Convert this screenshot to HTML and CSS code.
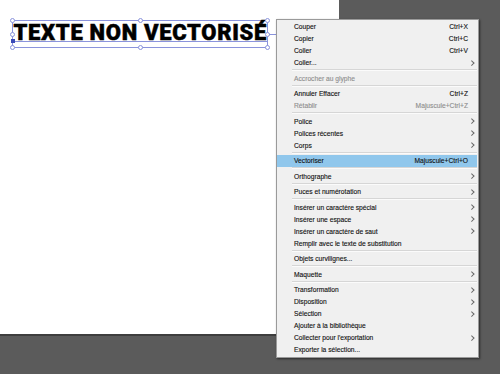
FILE: index.html
```html
<!DOCTYPE html>
<html lang="fr">
<head>
<meta charset="utf-8">
<link rel="stylesheet" href="styles.css">
</head>
<body>
<div class="canvas">
  <div class="artboard">
    <div class="frame">
      <span class="title">TEXTE NON VECTORISÉ</span>
      <i class="baseline"></i>
      <i class="bl-mark"></i>
      <i class="h tl"></i><i class="h tm"></i><i class="h tr"></i>
      <i class="h ml"></i><i class="h mr"></i>
      <i class="h bl"></i><i class="h bm"></i><i class="h br"></i>
      <i class="port"></i>
    </div>
  </div>
  <div class="menu">
    <div class="mi"><span class="lbl">Couper</span><span class="key">Ctrl+X</span><span class="arr"></span></div>
    <div class="mi"><span class="lbl">Copier</span><span class="key">Ctrl+C</span><span class="arr"></span></div>
    <div class="mi"><span class="lbl">Coller</span><span class="key">Ctrl+V</span><span class="arr"></span></div>
    <div class="mi"><span class="lbl">Coller...</span><span class="arr sub"></span></div>
    <div class="sep"></div>
    <div class="mi dis"><span class="lbl">Accrocher au glyphe</span><span class="arr"></span></div>
    <div class="sep"></div>
    <div class="mi"><span class="lbl">Annuler Effacer</span><span class="key">Ctrl+Z</span><span class="arr"></span></div>
    <div class="mi dis"><span class="lbl">Rétablir</span><span class="key">Majuscule+Ctrl+Z</span><span class="arr"></span></div>
    <div class="sep"></div>
    <div class="mi"><span class="lbl">Police</span><span class="arr sub"></span></div>
    <div class="mi"><span class="lbl">Polices récentes</span><span class="arr sub"></span></div>
    <div class="mi"><span class="lbl">Corps</span><span class="arr sub"></span></div>
    <div class="sep"></div>
    <div class="mi hl"><span class="lbl">Vectoriser</span><span class="key">Majuscule+Ctrl+O</span><span class="arr"></span></div>
    <div class="sep"></div>
    <div class="mi"><span class="lbl">Orthographe</span><span class="arr sub"></span></div>
    <div class="sep"></div>
    <div class="mi"><span class="lbl">Puces et numérotation</span><span class="arr sub"></span></div>
    <div class="sep"></div>
    <div class="mi"><span class="lbl">Insérer un caractère spécial</span><span class="arr sub"></span></div>
    <div class="mi"><span class="lbl">Insérer une espace</span><span class="arr sub"></span></div>
    <div class="mi"><span class="lbl">Insérer un caractère de saut</span><span class="arr sub"></span></div>
    <div class="mi"><span class="lbl">Remplir avec le texte de substitution</span><span class="arr"></span></div>
    <div class="sep"></div>
    <div class="mi"><span class="lbl">Objets curvilignes...</span><span class="arr"></span></div>
    <div class="sep"></div>
    <div class="mi"><span class="lbl">Maquette</span><span class="arr sub"></span></div>
    <div class="sep"></div>
    <div class="mi"><span class="lbl">Transformation</span><span class="arr sub"></span></div>
    <div class="mi"><span class="lbl">Disposition</span><span class="arr sub"></span></div>
    <div class="mi"><span class="lbl">Sélection</span><span class="arr sub"></span></div>
    <div class="mi"><span class="lbl">Ajouter à la bibliothèque</span><span class="arr"></span></div>
    <div class="mi"><span class="lbl">Collecter pour l'exportation</span><span class="arr sub"></span></div>
    <div class="mi"><span class="lbl">Exporter la sélection...</span><span class="arr"></span></div>
  </div>
</div>
</body>
</html>
```

FILE: styles.css
```css
* { box-sizing: border-box; }
html, body { margin: 0; padding: 0; }
body {
  background: #5b5b5b;
  width: 500px;
  height: 374px;
  overflow: hidden;
}
.canvas {
  position: relative;
  width: 500px;
  height: 374px;
}
.artboard {
  width: 339px;
  height: 336px;
  background: #ffffff;
  border-bottom: 2px solid #3e3e3e;
  padding-top: 20px;
  padding-left: 12px;
}
.frame {
  position: relative;
  width: 256px;
  height: 28px;
  border: 1px solid #8a93dc;
}
.title {
  display: block;
  font-family: Roboto, "Liberation Sans", sans-serif;
  font-weight: 900;
  font-size: 22px;
  line-height: 24.5px;
  color: #000;
  padding-left: 0.5px;
  white-space: nowrap;
  letter-spacing: 0.7px;
  -webkit-text-stroke: 0.5px #000;
}
.baseline {
  position: absolute;
  left: 0;
  right: 0;
  top: 19.5px;
  height: 1px;
  background: #8a93dc;
}
.bl-mark {
  position: absolute;
  left: -2.5px;
  top: 18px;
  width: 4px;
  height: 4px;
  background: #3b4bb8;
}
.h {
  position: absolute;
  width: 5px;
  height: 5px;
  border: 1px solid #8a93dc;
  border-radius: 50%;
  background: #fff;
}
.tl { left: -3px; top: -3px; }
.tm { left: 124.5px; top: -3px; }
.tr { right: -3px; top: -3px; }
.ml { left: -3px; top: 10.5px; }
.mr { right: -3px; top: 10.5px; }
.bl { left: -3px; bottom: -3px; }
.bm { left: 124.5px; bottom: -3px; }
.br { right: -3px; bottom: -3px; }
.port {
  position: absolute;
  left: 256px;
  top: 12.5px;
  width: 10px;
  height: 1px;
  background: #8a93dc;
}
.menu {
  position: absolute;
  left: 276px;
  top: 19px;
  width: 203px;
  background: #f0f0f0;
  border: 1px solid #9a9a9a;
  padding: 0.7px 0 1px;
  box-shadow: 1px 1px 2px rgba(0, 0, 0, 0.55);
  font-family: "Liberation Sans", Arial, sans-serif;
  font-size: 6.7px;
  color: #111;
  -webkit-text-stroke: 0.12px #111;
}
.mi {
  display: flex;
  align-items: center;
  height: 12px;
  margin-right: 1px;
  padding: 0 1px 0 17px;
  white-space: nowrap;
}
.mi .lbl { flex: 1; }
.mi.dis { color: #8e8e8e; -webkit-text-stroke: 0.12px #8e8e8e; }
.mi.hl { background: #90c7ec; }
.arr {
  width: 8px;
  height: 12px;
  display: flex;
  align-items: center;
  justify-content: center;
}
.arr.sub::after {
  content: "";
  width: 2.5px;
  height: 2.5px;
  border-top: 1px solid #666;
  border-right: 1px solid #666;
  transform: rotate(45deg);
  margin-left: -1px;
}
.sep {
  height: 3.5px;
  margin: 0 1px 0 15px;
  display: flex;
  align-items: center;
}
.sep::before {
  content: "";
  flex: 1;
  height: 1px;
  background: #d6d6d6;
  border-bottom: 1px solid #fbfbfb;
  box-sizing: content-box;
}
```
